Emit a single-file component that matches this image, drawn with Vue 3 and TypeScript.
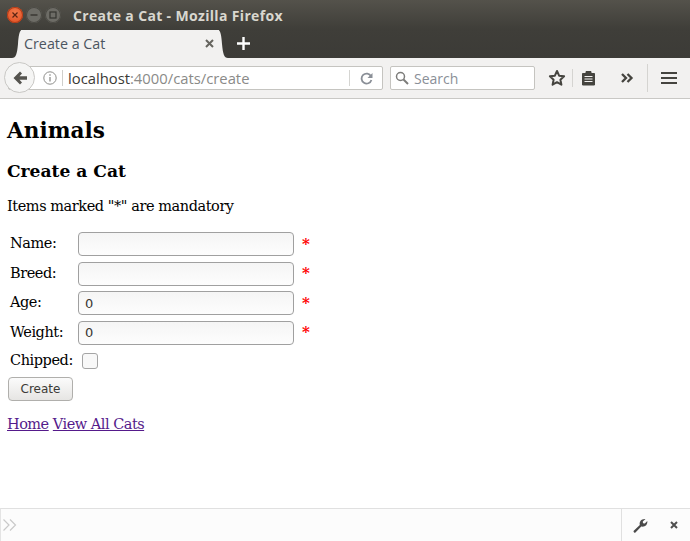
<script setup lang="ts">
interface Field {
  label: string
  value: string
}

const fields: Field[] = [
  { label: 'Name:', value: '' },
  { label: 'Breed:', value: '' },
  { label: 'Age:', value: '0' },
  { label: 'Weight:', value: '0' },
]
</script>

<template>
  <div class="window">
    <header class="chrome">
      <div class="titlebar">
        <div class="controls">
          <span class="ctl ctl--close">
            <svg width="8" height="8" viewBox="0 0 8 8"><path d="M1.500 1.500l5 5M6.500 1.500l-5 5" stroke="#5c2412" stroke-width="1.200" /></svg>
          </span>
          <span class="ctl">
            <svg width="8" height="8" viewBox="0 0 8 8"><path d="M0.500 4h7" stroke="#35342f" stroke-width="1.400" /></svg>
          </span>
          <span class="ctl">
            <svg width="8" height="8" viewBox="0 0 8 8"><rect x="1" y="1" width="6" height="6" fill="none" stroke="#35342f" stroke-width="1.200" /></svg>
          </span>
        </div>
        <span class="title">Create a Cat - Mozilla Firefox</span>
      </div>
      <div class="tabstrip">
        <div class="tab">
          <svg class="tab__curve tab__curve--left" width="10" height="28" viewBox="0 0 10 28"><path d="M0 28C4 28 5 24 6 14 6.500 6 7.500 0 10 0V28Z" fill="#f2f1f0" /></svg>
          <span class="tab__label">Create a Cat</span>
          <svg class="tab__x" width="9" height="9" viewBox="0 0 9 9"><path d="M1 1l7 7M8 1L1 8" stroke="#66655f" stroke-width="2" /></svg>
          <svg class="tab__curve tab__curve--right" width="10" height="28" viewBox="0 0 10 28"><path d="M10 28C6 28 5 24 4 14 3.500 6 2.500 0 0 0V28Z" fill="#f2f1f0" /></svg>
        </div>
        <svg class="newtab" width="13" height="13" viewBox="0 0 13 13"><path d="M6.500 0v13M0 6.500h13" stroke="#fff" stroke-width="2.400" /></svg>
      </div>
      <div class="navbar">
        <div class="urlbar">
          <span class="back">
            <svg width="16" height="16" viewBox="0 0 16 16"><path d="M8 1.500L1.500 8 8 14.500l2-2L7.500 9.700H15V6.300H7.500L10 3.500Z" fill="#55544f" /></svg>
          </span>
          <svg class="info" width="14" height="14" viewBox="0 0 14 14"><circle cx="7" cy="7" r="6.200" fill="none" stroke="#8d8d8a" /><path d="M7 6v4.500M7 3.200v1.600" stroke="#8d8d8a" stroke-width="1.300" /></svg>
          <span class="url"><span class="url__host">localhost</span>:4000/cats/create</span>
          <span class="reload">
            <svg width="13" height="13" viewBox="0 0 13 13"><path d="M11 4.200A5 5 0 1 0 11.400 8" fill="none" stroke="#8a8f97" stroke-width="1.800" /><path d="M12.500 1v5h-5Z" fill="#8a8f97" /></svg>
          </span>
        </div>
        <div class="search">
          <svg width="14" height="14" viewBox="0 0 14 14"><circle cx="5.500" cy="5.500" r="4" fill="none" stroke="#7c7c7a" stroke-width="1.500" /><path d="M8.500 8.500L13 13" stroke="#7c7c7a" stroke-width="2" /></svg>
          <span>Search</span>
        </div>
        <svg class="star" width="18" height="18" viewBox="0 0 18 18"><path d="M9 2l2.100 4.700 5 .6-3.700 3.400 1 5L9 13.200l-4.400 2.500 1-5L1.900 7.300l5-.6Z" fill="none" stroke="#45443f" stroke-width="2" stroke-linejoin="round" /></svg>
        <i class="sep" />
        <svg class="clip" width="15" height="16" viewBox="0 0 15 16"><path d="M1.500 3.500h3.500V1.500h5v2h3.500v11.500h-12Z" fill="#45443f" stroke="#45443f" stroke-linejoin="round" /><path d="M3.500 6.500h8M3.500 9h8M3.500 11.500h8" stroke="#f2f1f0" stroke-width="1" /></svg>
        <svg class="more" width="13" height="10" viewBox="0 0 13 10"><path d="M1 1l4 4-4 4M6.500 1l4 4-4 4" fill="none" stroke="#45443f" stroke-width="2.300" /></svg>
        <i class="sep sep--tall" />
        <svg class="menu" width="16" height="14" viewBox="0 0 16 14"><path d="M0 2h16M0 7h16M0 12h16" stroke="#45443f" stroke-width="2.200" /></svg>
      </div>
    </header>

    <main class="page">
      <h1>Animals</h1>
      <h3>Create a Cat</h3>
      <p>Items marked "*" are mandatory</p>
      <form @submit.prevent>
        <table>
          <tbody>
            <tr v-for="field in fields" :key="field.label">
              <td class="label">{{ field.label }}</td>
              <td><input class="text" type="text" :value="field.value" /></td>
              <td class="req">*</td>
            </tr>
            <tr>
              <td class="label label--last">Chipped:</td>
              <td><input class="check" type="checkbox" /></td>
            </tr>
          </tbody>
        </table>
        <button class="btn" type="submit">Create</button>
      </form>
      <p class="links"><a href="#">Home</a> <a href="#">View All Cats</a></p>
    </main>

    <footer class="devbar">
      <svg class="devbar__prompt" width="14" height="12" viewBox="0 0 14 12"><path d="M0.500 0.500L6 6 .5 11.500M7 0.500L12.500 6 7 11.500" fill="none" stroke="#c9c9c9" stroke-width="1.200" /></svg>
      <div class="devbar__tools">
        <svg width="15" height="15" viewBox="0 0 15 15"><path d="M0.500 13L6.800 6.900C6 3.500 8.500 0.500 12.500 1L9.800 3.500 10 5.300 11.800 5.500 14.300 3C14.800 7 11.800 9.200 8.300 8.500L2.200 14.800C1.500 15 0.300 13.800 0.500 13Z" fill="#4a4a4a" /></svg>
        <svg class="devbar__x" width="8" height="8" viewBox="0 0 8 8"><path d="M1 1l6 6M7 1L1 7" stroke="#4f4f4f" stroke-width="2" /></svg>
      </div>
    </footer>
  </div>
</template>

<style>
html,
body {
  margin: 0;
  background: #fff;
}
</style>

<style scoped>
.window {
  display: flex;
  flex-direction: column;
  width: 690px;
  height: 541px;
  overflow: hidden;
  font-family: 'DejaVu Serif', serif;
  font-size: 14.500px;
  letter-spacing: -0.440px;
  color: #000;
}

.chrome {
  flex: 0 0 99px;
  box-sizing: border-box;
  display: flex;
  flex-direction: column;
  background: linear-gradient(#54524b 0, #3f3e39 29px, #3c3b37 58px, #f2f1f0 58px);
  border-bottom: 1px solid #c9c8c5;
  letter-spacing: 0;
}

.titlebar {
  flex: 0 0 30px;
  display: flex;
  align-items: center;
  padding-left: 7px;
}

.controls {
  display: flex;
  gap: 3px;
}

.ctl {
  width: 16px;
  height: 16px;
  border-radius: 50%;
  display: flex;
  align-items: center;
  justify-content: center;
  background: #6d6c66;
  box-shadow: inset 0 0 0 1px #4a4943;
}

.ctl--close {
  background: radial-gradient(circle at 50% 35%, #f27a4a, #df4a1f);
  box-shadow: inset 0 0 0 1px #b03c18;
}

.title {
  margin-left: 12px;
  font: 700 14px 'Open Sans', sans-serif;
  color: #d9d7cf;
  letter-spacing: 0.34px;
}

.tabstrip {
  flex: 0 0 28px;
  display: flex;
  align-items: flex-end;
  padding-left: 21px;
}

.tab {
  position: relative;
  width: 198px;
  height: 28px;
  display: flex;
  align-items: center;
  justify-content: space-between;
  padding: 0 0 2px 3px;
  box-sizing: border-box;
  background: #f2f1f0;
}

.tab__curve {
  position: absolute;
  bottom: 0;
}

.tab__curve--left {
  left: -9px;
}

.tab__curve--right {
  right: -9px;
}

.tab__label {
  font: 14.300px 'Open Sans', sans-serif;
  color: #4c5560;
}

.tab__x {
  margin-right: 5px;
}

.newtab {
  margin: 0 0 8px 18px;
}

.navbar {
  flex: 1;
  display: flex;
  align-items: center;
  padding: 0 12px 0 8px;
}

.urlbar {
  position: relative;
  width: 375px;
  height: 24px;
  box-sizing: border-box;
  display: flex;
  align-items: center;
  padding-left: 34px;
  background: #fff;
  border: 1px solid #c5c4c0;
  border-radius: 2px;
}

.back {
  position: absolute;
  left: -5px;
  top: -5px;
  width: 31px;
  height: 31px;
  display: flex;
  align-items: center;
  justify-content: center;
  box-sizing: border-box;
  background: #f5f5f4;
  border: 1px solid #c9c8c5;
  border-radius: 50%;
}

.info {
  flex: none;
}

.url {
  margin-left: 5px;
  padding-left: 5px;
  border-left: 1px solid #cfcfcc;
  font: 14.800px/16px 'Open Sans', sans-serif;
  color: #8a8a88;
}

.url__host {
  color: #3b3a36;
}

.reload {
  position: absolute;
  right: 0;
  top: 3px;
  width: 32px;
  height: 16px;
  display: flex;
  align-items: center;
  justify-content: center;
  border-left: 1px solid #d5d5d2;
}

.search {
  width: 145px;
  height: 24px;
  box-sizing: border-box;
  margin-left: 7px;
  display: flex;
  align-items: center;
  gap: 5px;
  padding-left: 4px;
  background: #fff;
  border: 1px solid #c5c4c0;
  border-radius: 2px;
  font: 14px 'Open Sans', sans-serif;
  color: #8a8f97;
}

.star {
  margin-left: 13px;
}

.sep {
  width: 1px;
  height: 18px;
  margin-left: 6px;
  background: #d5d4d1;
}

.sep--tall {
  height: 28px;
  margin-left: 13px;
}

.clip {
  margin-left: 8px;
}

.more {
  margin-left: 25px;
}

.menu {
  margin-left: 13px;
}

.page {
  flex: 1;
  padding: 0 7px;
  overflow: hidden;
}

h1 {
  margin: 19px 0 0;
  font-size: 21.600px;
  line-height: 26px;
  letter-spacing: 0;
}

h3 {
  margin: 17px 0 0;
  font-size: 17.100px;
  line-height: 20px;
  letter-spacing: 0;
}

p {
  margin: 17px 0 0;
  line-height: 17px;
}

form {
  margin-top: 13.500px;
}

table {
  border-spacing: 1px 2px;
  border-collapse: separate;
}

td {
  padding: 1.750px 2px;
}

.label {
  padding: 0 2px 2px;
}

.label--last {
  padding-bottom: 0;
}

.text {
  display: block;
  width: 216px;
  height: 24px;
  box-sizing: border-box;
  margin: 0;
  padding: 0 6px;
  border: 1px solid #a0a0a0;
  border-radius: 4px;
  background: linear-gradient(#f5f5f5, #fdfdfd);
  font: 13px 'DejaVu Sans', sans-serif;
  letter-spacing: 0;
  color: #3a3632;
  outline: none;
}

.req {
  padding: 0 2px 1px 5px;
  color: #f00;
  font-size: 15px;
  font-weight: 700;
  letter-spacing: 0;
}

.check {
  display: block;
  appearance: none;
  width: 16px;
  height: 16px;
  margin: 3px 0 0 4px;
  box-sizing: border-box;
  border: 1px solid #a5a5a5;
  border-radius: 3px;
  background: #f8f8f8;
}

.btn {
  display: block;
  width: 65px;
  height: 24px;
  margin: 4px 0 0 1px;
  padding: 0;
  border: 1px solid #b0afac;
  border-radius: 4px;
  background: linear-gradient(#fbfbfb, #e6e5e3);
  font: 12px 'DejaVu Sans', sans-serif;
  letter-spacing: 0;
  color: #3c3b37;
}

.links {
  margin-top: 15px;
  letter-spacing: -0.500px;
}

a {
  color: #551a8b;
}

.devbar {
  flex: 0 0 33px;
  box-sizing: border-box;
  display: flex;
  align-items: center;
  justify-content: space-between;
  background: #fcfcfc;
  border-top: 1px solid #e0e0e0;
  border-left: 1px solid #e4e4e4;
  padding-left: 2px;
}

.devbar__tools {
  align-self: stretch;
  width: 69px;
  display: flex;
  align-items: center;
  gap: 22px;
  padding-left: 11px;
  box-sizing: border-box;
  border-left: 1px solid #e0e0e0;
}
</style>
